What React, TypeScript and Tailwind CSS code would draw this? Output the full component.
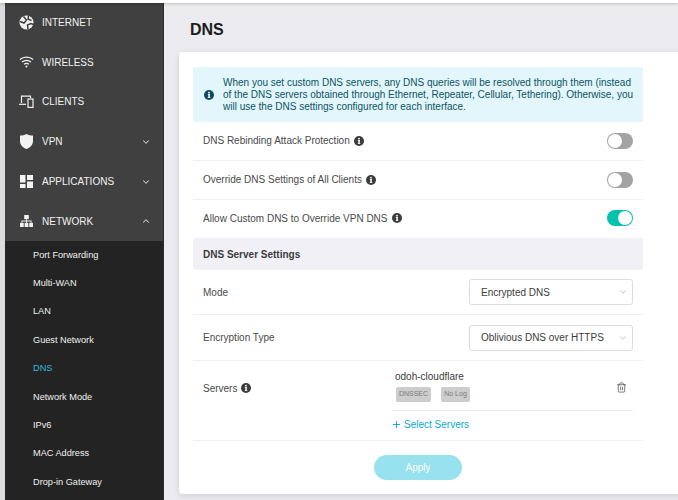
import { ChevronDown, ChevronUp, Plus, Trash2 } from "lucide-react";

const FONT = "font-['Liberation_Sans',Arial,sans-serif]";

function GlobeIcon() {
  return (
    <svg width="15" height="15" viewBox="0 0 15 15" fill="none">
      <circle cx="7.5" cy="7.5" r="7" fill="#f2f2f2" />
      <path d="M4.5 1.5 7.5 5 5 8 1 6.5M9 14l-.5-4 3.5-1.5 2.5 1M9.5 1 9 4l3.5 1.5" stroke="#404040" strokeWidth="1.5" />
    </svg>
  );
}

function WifiIcon() {
  return (
    <svg width="15" height="12" viewBox="0 0 15 12" fill="none" stroke="#f2f2f2" strokeWidth="1.3">
      <path d="M.8 3.6c4-3.2 9.4-3.2 13.4 0" />
      <path d="M3 6c2.700-2 6.300-2 9 0" />
      <path d="M5.100 8.200c1.500-1 3.300-1 4.800 0" />
      <circle cx="7.500" cy="10.600" r="1" fill="#f2f2f2" stroke="none" />
    </svg>
  );
}

function ClientsIcon() {
  return (
    <svg width="15" height="13" viewBox="0 0 15 13" fill="none" stroke="#f2f2f2" strokeWidth="1.2">
      <path d="M2.500 8V1.200h9V3" />
      <path d="M0 9.300h7" />
      <rect x="9" y="4" width="5" height="8.400" />
    </svg>
  );
}

function ShieldIcon() {
  return (
    <svg width="13" height="15" viewBox="0 0 13 15">
      <path d="M6.500 0C8.500 1 11 1.500 13 1.500V7c0 4-3 6.800-6.500 8C3 13.800 0 11 0 7V1.500C2 1.500 4.500 1 6.500 0Z" fill="#f2f2f2" />
    </svg>
  );
}

function AppsIcon() {
  return (
    <svg width="13" height="13" viewBox="0 0 13 13" fill="#f2f2f2">
      <rect x="0" y="0" width="5.500" height="7.500" />
      <rect x="7" y="0" width="6" height="5" />
      <rect x="0" y="9" width="5.500" height="4" />
      <rect x="7" y="6.500" width="6" height="6.500" />
    </svg>
  );
}

function NetworkIcon() {
  return (
    <svg width="13" height="12" viewBox="0 0 14 13" fill="#f2f2f2">
      <rect x="4.500" y="0" width="5" height="4.500" />
      <rect x="0" y="8.500" width="4" height="4.500" />
      <rect x="5" y="8.500" width="4" height="4.500" />
      <rect x="10" y="8.500" width="4" height="4.500" />
      <path d="M6.500 4.500h1V6H12.500V8.500h-1V7h-4v1.500h-1V7h-4v1.500h-1V6h5Z" />
    </svg>
  );
}

function InfoDot({ color = "#3c3c3c", size = 10 }: { color?: string; size?: number }) {
  return (
    <svg width={size} height={size} viewBox="0 0 10 10" className="shrink-0">
      <circle cx="5" cy="5" r="5" fill={color} />
      <rect x="4.300" y="4.200" width="1.500" height="3.300" fill="#fff" />
      <rect x="3.800" y="7" width="2.500" height="0.800" fill="#fff" />
      <rect x="3.800" y="4" width="2" height="0.800" fill="#fff" />
      <circle cx="5" cy="2.700" r="0.900" fill="#fff" />
    </svg>
  );
}

const mainNav = [
  { label: "INTERNET", icon: <GlobeIcon /> },
  { label: "WIRELESS", icon: <WifiIcon /> },
  { label: "CLIENTS", icon: <ClientsIcon /> },
  { label: "VPN", icon: <ShieldIcon />, chevron: "down" },
  { label: "APPLICATIONS", icon: <AppsIcon />, chevron: "down" },
  { label: "NETWORK", icon: <NetworkIcon />, chevron: "up" },
];

const subNav = [
  "Port Forwarding",
  "Multi-WAN",
  "LAN",
  "Guest Network",
  "DNS",
  "Network Mode",
  "IPv6",
  "MAC Address",
  "Drop-in Gateway",
];

function Sidebar() {
  return (
    <aside className="w-[159px] ml-[5px] shrink-0 h-full bg-[#404040] border-r border-[#2c2c2c] overflow-hidden">
      <div>
        {mainNav.map((item) => (
          <div key={item.label} className="h-[39.800px] flex items-center pl-[12px] pr-[12px] first:mt-[-0.500px]">
            <span className="w-[18px] flex justify-center shrink-0">{item.icon}</span>
            <span className="ml-[7px] text-[10px] text-[#f2f2f2] flex-1">{item.label}</span>
            {item.chevron === "down" && <ChevronDown size={10} color="#d0d0d0" strokeWidth={2.500} />}
            {item.chevron === "up" && <ChevronUp size={10} color="#d0d0d0" strokeWidth={2.500} />}
          </div>
        ))}
      </div>
      <div className="bg-[#232323] h-[300px]">
        {subNav.map((label) => (
          <div
            key={label}
            className={`h-[28.400px] flex items-center pl-[28px] text-[9.200px] ${
              label === "DNS" ? "text-[#35b8dc]" : "text-[#f0f0f0]"
            }`}
          >
            {label}
          </div>
        ))}
      </div>
    </aside>
  );
}

function Toggle({ on }: { on?: boolean }) {
  return (
    <span
      className={`w-[26px] h-4 rounded-full flex items-center p-[1px] ${
        on ? "bg-[#04c2ab] justify-end" : "bg-[#a3a3a3] justify-start"
      }`}
    >
      <span className="w-[14px] h-[14px] rounded-full bg-white" />
    </span>
  );
}

function ToggleRow({ label, on, last }: { label: string; on?: boolean; last?: boolean }) {
  return (
    <div
      className={`flex items-center justify-between pl-[10px] pr-[10px] pb-[1px] ${
        last ? "h-[38px] pb-[2px]" : "h-[39px] border-b border-[#f0f0f3]"
      }`}
    >
      <span className="flex items-center gap-[4px] text-[#4a4a4a]">
        {label}
        <InfoDot />
      </span>
      <Toggle on={on} />
    </div>
  );
}

function SelectRow({ label, value, height }: { label: string; value: string; height: string }) {
  return (
    <div className={`${height} flex items-center justify-between pl-[10px] pr-[10px] border-b border-[#f0f0f3]`}>
      <span className="text-[#4a4a4a]">{label}</span>
      <div className="w-[164px] h-[26px] rounded-[3px] border border-[#dcdcdc] flex items-center justify-between pl-[11px] pr-[4px] text-[#3c3c3c]">
        {value}
        <ChevronDown size={10} color="#b8b8b8" />
      </div>
    </div>
  );
}

function Tag({ children, width }: { children: string; width: string }) {
  return (
    <span className={`${width} h-[15px] rounded-[2px] bg-[#cdcdcd] text-[#7c7c7c] text-[7px] flex items-center justify-center`}>
      {children}
    </span>
  );
}

export default function App() {
  return (
    <div className={`${FONT} w-[678px] h-[500px] overflow-hidden bg-[#dcdce0] flex flex-col text-[10px]`}>
      <div className="h-[3px] bg-white shrink-0 shadow-[0_1px_3px_rgba(0,0,0,0.2)] z-10" />
      <div className="flex flex-1 min-h-0">
        <Sidebar />
        <main className="flex-1 min-w-0 pl-[15px] bg-[#ecebf0]">
          <h1 className="h-[49px] pt-[18px] pl-[11px] text-[16px] leading-[18px] font-bold text-[#1c1c1c]">DNS</h1>
          <div className="w-[520px] h-[442px] bg-white rounded-[4px] shadow-[0_2px_6px_rgba(0,0,0,0.12)] pt-[15px] pl-[14px]">
            <div className="w-[450px]">
              <div className="h-[55px] rounded-[3px] bg-[#e2f6fb] flex items-center pl-[11px] pr-[5px] gap-[9px] text-[#0b5463] leading-[12px]">
                <InfoDot color="#0d4a5c" />
                <p>
                  When you set custom DNS servers, any DNS queries will be resolved through them (instead of the DNS
                  servers obtained through Ethernet, Repeater, Cellular, Tethering). Otherwise, you will use the DNS
                  settings configured for each interface.
                </p>
              </div>
              <ToggleRow label="DNS Rebinding Attack Protection" />
              <ToggleRow label="Override DNS Settings of All Clients" />
              <ToggleRow label="Allow Custom DNS to Override VPN DNS" on last />
              <div className="h-[32px] rounded-[3px] bg-[#f1f0f6] flex items-center pl-[10px] font-bold text-[#3c3c3c]">
                DNS Server Settings
              </div>
              <SelectRow label="Mode" value="Encrypted DNS" height="h-[45px]" />
              <SelectRow label="Encryption Type" value="Oblivious DNS over HTTPS" height="h-[46px]" />
              <div className="h-[80px] flex pl-[10px] pr-[10px] border-b border-[#f0f0f3]">
                <span className="w-[189px] h-[54px] flex items-center gap-[4px] text-[#4a4a4a]">
                  Servers
                  <InfoDot />
                </span>
                <div className="flex-1 min-w-0">
                  <div className="h-[50px] border-b border-[#e8e8e8] flex justify-between pl-[3px] pr-[6px] pt-[8px]">
                    <div>
                      <div className="text-[#3c3c3c] leading-[15px]">odoh-cloudflare</div>
                      <div className="flex gap-[10px] mt-[3px] ml-[1px]">
                        <Tag width="w-[35px]">DNSSEC</Tag>
                        <Tag width="w-[29px]">No Log</Tag>
                      </div>
                    </div>
                    <Trash2 size={11} color="#6e6e6e" className="mt-[13px]" />
                  </div>
                  <div className="h-[27px] flex items-center gap-[2px] text-[#06a9d1]">
                    <Plus size={11} className="ml-[-1px]" />
                    Select Servers
                  </div>
                </div>
              </div>
              <div className="flex justify-center pt-[14px]">
                <button className="w-[88px] h-[25px] rounded-full bg-[#98e1ee] text-white">Apply</button>
              </div>
            </div>
          </div>
        </main>
      </div>
    </div>
  );
}
